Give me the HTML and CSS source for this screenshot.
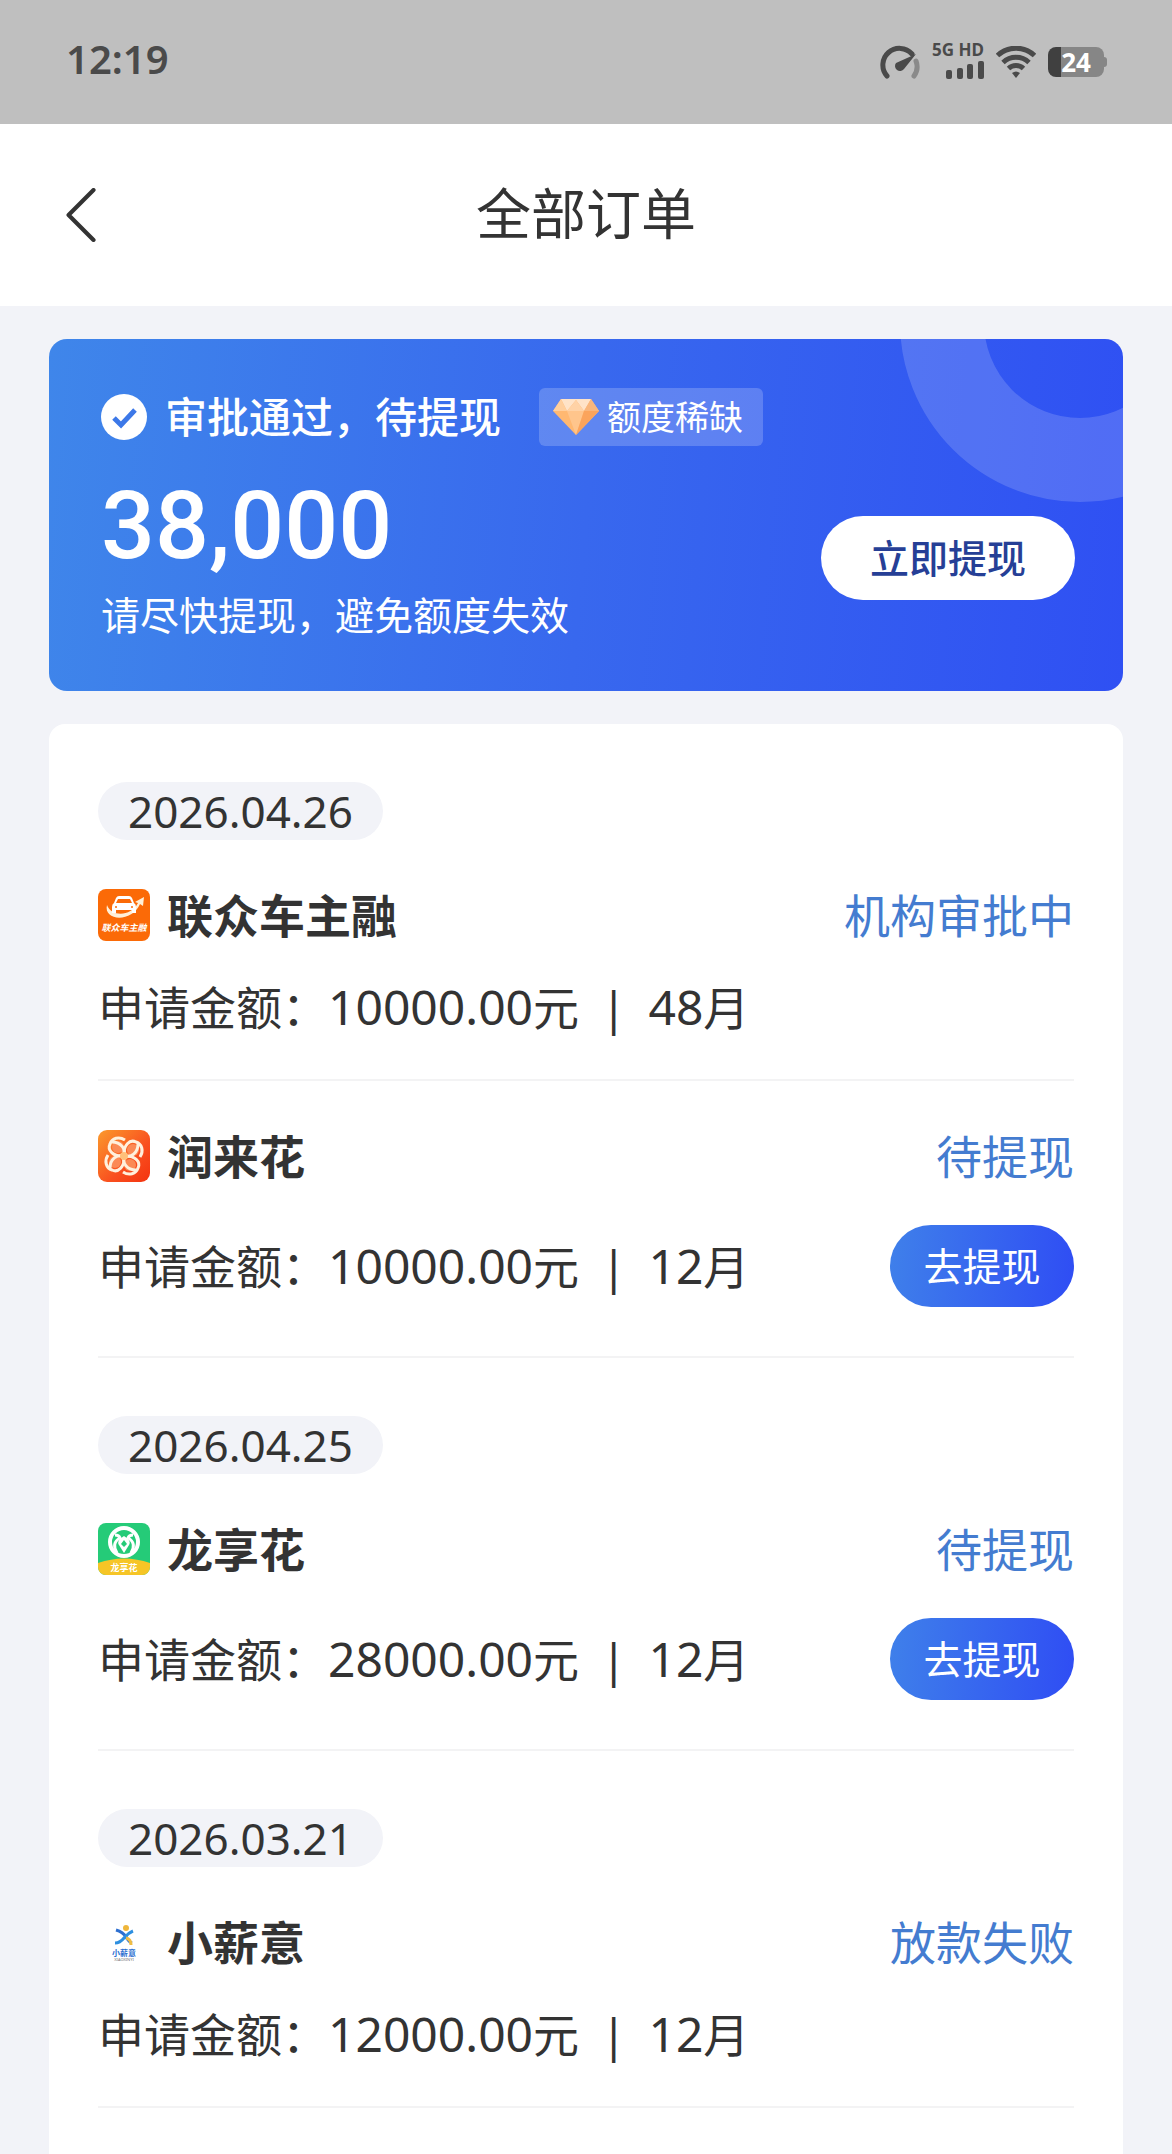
FILE: index.html
```html
<!DOCTYPE html>
<html lang="zh-CN">
<head>
  <meta charset="UTF-8">
  <meta name="viewport" content="width=device-width, initial-scale=1.0">
  <title>全部订单</title>
  <link rel="stylesheet" href="styles.css">
</head>
<body>
  <div class="status-bar">
    <span class="status-time">12:19</span>
    <div class="status-icons">
      <svg class="icon-gauge" viewBox="0 0 40 34" aria-hidden="true">
        <path d="M7 31A16 16 0 0 1 32 9" fill="none" stroke="#4a4a4a" stroke-width="5" stroke-linecap="round"/>
        <path d="M36 16A16 16 0 0 1 34 31" fill="none" stroke="#8a8a8a" stroke-width="5" stroke-linecap="round"/>
        <path d="M36 9L24 24A5 5 0 1 1 16 18Z" fill="#4a4a4a"/>
      </svg>
      <div class="signal">
        <span class="signal-label">5G HD</span>
        <svg class="icon-bars" viewBox="0 0 38 18" fill="#4a4a4a" aria-hidden="true">
          <rect x="0" y="9" width="6" height="9" rx="2"/>
          <rect x="11" y="7" width="6" height="11" rx="2"/>
          <rect x="21" y="3" width="6" height="15" rx="2"/>
          <rect x="32" y="0" width="6" height="18" rx="2"/>
        </svg>
      </div>
      <svg class="icon-wifi" viewBox="0 0 40 32" aria-hidden="true">
        <g fill="none" stroke="#4a4a4a" stroke-width="5">
          <path d="M1.500 9.500A27 27 0 0 1 38.500 9.500"/>
          <path d="M7 16.500A19 19 0 0 1 33 16.500"/>
          <path d="M12.500 22.500A11 11 0 0 1 27.500 22.500"/>
        </g>
        <path d="M16 27Q20 24 24 27L20 32Z" fill="#4a4a4a"/>
      </svg>
      <div class="battery"><span>24</span></div>
    </div>
  </div>

  <header class="nav">
    <button class="back" type="button" aria-label="返回">
      <svg viewBox="0 0 30 52"><path d="M28 2L4 26L28 50" fill="none" stroke="#333" stroke-width="4" stroke-linecap="round" stroke-linejoin="round"/></svg>
    </button>
    <h1>全部订单</h1>
  </header>

  <main>
    <section class="banner">
      <svg class="banner-ring" viewBox="0 0 360 360" aria-hidden="true">
        <circle cx="180" cy="180" r="138" fill="none" stroke="#fff" stroke-opacity="0.16" stroke-width="84"/>
      </svg>
      <div class="banner-info">
        <div class="banner-title">
          <svg class="icon-check" viewBox="0 0 46 46" aria-hidden="true">
            <circle cx="23" cy="23" r="23" fill="#fff"/>
            <path d="M13 24L20 31L34 16" fill="none" stroke="#3c78e8" stroke-width="5"/>
          </svg>
          <h2>审批通过，待提现</h2>
          <span class="tag">
            <svg class="icon-diamond" viewBox="0 0 46 36" aria-hidden="true">
              <path d="M8 0H38L46 12L23 36L0 12Z" fill="#ffb871"/>
              <path d="M8 0H38L31 12L23 1L14 12Z" fill="#ffe3c8"/>
              <path d="M8 0L14 12H0Z" fill="#ffcf9e"/>
              <path d="M38 0L46 12H31Z" fill="#f9b67c"/>
              <path d="M23 1L31 12H14Z" fill="#ffd2a6"/>
              <path d="M14 12H31L23 36Z" fill="#ffc58c"/>
              <path d="M31 12H46L23 36Z" fill="#fba45c"/>
            </svg>
            额度稀缺
          </span>
        </div>
        <p class="banner-amount">38,000</p>
        <p class="banner-tip">请尽快提现，避免额度失效</p>
      </div>
      <button class="btn-banner" type="button">立即提现</button>
    </section>

    <section class="orders">
      <div class="date">2026.04.26</div>
      <article class="order">
        <div class="order-head">
          <svg class="logo" viewBox="0 0 52 52" aria-hidden="true">
            <rect width="52" height="52" rx="8" fill="#fb6a07"/>
            <path d="M9 16C5 32 34 34 42 15L45 17L46 8L37 13L40 14C33 28 13 28 9 16Z" fill="#fff0d8"/>
            <path d="M18 9Q19 7 21 7H31Q33 7 34 9L36 14Q38 15 38 18V24H34V21H18V24H14V18Q14 15 16 14Z" fill="#fff"/>
            <path d="M20 10H32L34 14H18Z" fill="#fb6a07"/>
            <circle cx="18" cy="18" r="1" fill="#fb6a07"/>
            <circle cx="34" cy="18" r="1" fill="#fb6a07"/>
            <text x="26" y="42" class="logo-text logo-text-car">联众车主融</text>
          </svg>
          <h3>联众车主融</h3>
          <span class="state">机构审批中</span>
        </div>
        <div class="order-detail">
          <p>申请金额：<b>10000.00</b>元<i>|</i><b>48</b>月</p>
        </div>
      </article>
      <article class="order">
        <div class="order-head">
          <svg class="logo" viewBox="0 0 52 52" aria-hidden="true">
            <defs>
              <linearGradient id="flower-bg" x1="0" y1="0" x2="1" y2="1">
                <stop offset="0" stop-color="#fb9a2c"/>
                <stop offset="0.6" stop-color="#f9501f"/>
                <stop offset="1" stop-color="#f4330f"/>
              </linearGradient>
              <g id="petal">
                <circle cx="20" cy="17" r="6" fill="#fb8a55"/>
                <path d="M26 26C15 27 9 20 12 14C14 8 21 6 27 10" fill="none" stroke="#fff0dc" stroke-width="3"/>
                <path d="M26 26C28 19 23 12 14 12" fill="none" stroke="#fff0dc" stroke-width="3"/>
              </g>
            </defs>
            <rect width="52" height="52" rx="9" fill="url(#flower-bg)"/>
            <use href="#petal"/>
            <use href="#petal" transform="rotate(90 26 26)"/>
            <use href="#petal" transform="rotate(180 26 26)"/>
            <use href="#petal" transform="rotate(270 26 26)"/>
            <circle cx="26" cy="26" r="4" fill="#ffc07a"/>
          </svg>
          <h3>润来花</h3>
          <span class="state">待提现</span>
        </div>
        <div class="order-detail">
          <p>申请金额：<b>10000.00</b>元<i>|</i><b>12</b>月</p>
          <button class="btn-withdraw" type="button">去提现</button>
        </div>
      </article>

      <div class="date">2026.04.25</div>
      <article class="order">
        <div class="order-head">
          <svg class="logo" viewBox="0 0 52 52" aria-hidden="true">
            <defs>
              <clipPath id="leaf-clip"><rect width="52" height="52" rx="8"/></clipPath>
            </defs>
            <g clip-path="url(#leaf-clip)">
              <rect width="52" height="52" fill="#25cb78"/>
              <path d="M0 40Q26 31 52 40V52H0Z" fill="#f6c526"/>
            </g>
            <circle cx="26" cy="19" r="14" fill="none" stroke="#fff" stroke-width="4"/>
            <path d="M17 12Q21 12 22 15C16 18 15 24 19 30M35 12Q31 12 30 15C36 18 37 24 33 30" fill="none" stroke="#fff" stroke-width="3"/>
            <path d="M26 13C31 16 33 19 31 22L26 30L21 22C19 19 21 16 26 13Z" fill="#fff"/>
            <path d="M26 17L29 21L26 24L23 21Z" fill="#25cb78"/>
            <text x="26" y="48" class="logo-text logo-text-leaf">龙享花</text>
          </svg>
          <h3>龙享花</h3>
          <span class="state">待提现</span>
        </div>
        <div class="order-detail">
          <p>申请金额：<b>28000.00</b>元<i>|</i><b>12</b>月</p>
          <button class="btn-withdraw" type="button">去提现</button>
        </div>
      </article>

      <div class="date">2026.03.21</div>
      <article class="order">
        <div class="order-head">
          <svg class="logo" viewBox="0 0 52 52" aria-hidden="true">
            <circle cx="28" cy="12" r="3" fill="#efb63a"/>
            <path d="M18 14Q25 16 28 21Q31 26 34 27" fill="none" stroke="#2d6fd0" stroke-width="3"/>
            <path d="M35 15Q30 17 26 22Q22 27 17 27" fill="none" stroke="#2d8fe0" stroke-width="3"/>
            <path d="M28 22Q33 23 33 29" fill="none" stroke="#f0bd45" stroke-width="3"/>
            <text x="26" y="40" class="logo-text logo-text-blue">小薪意</text>
            <text x="26" y="45" class="logo-text logo-text-sub">XIAOXINYI</text>
          </svg>
          <h3>小薪意</h3>
          <span class="state">放款失败</span>
        </div>
        <div class="order-detail">
          <p>申请金额：<b>12000.00</b>元<i>|</i><b>12</b>月</p>
        </div>
      </article>
    </section>
  </main>
</body>
</html>
```

FILE: styles.css
```css
* {
  box-sizing: border-box;
}
body {
  margin: 0;
  min-height: 100vh;
  display: flex;
  flex-direction: column;
  font-family: 'Noto Sans', 'Noto Sans CJK SC', sans-serif;
  background: #f2f3f8;
  color: #333;
}
h1, h2, h3, p {
  margin: 0;
}
button {
  border: none;
  padding: 0;
  font-family: inherit;
  cursor: pointer;
}
svg {
  display: block;
  flex: none;
}

/* status bar */
.status-bar {
  display: flex;
  justify-content: space-between;
  align-items: center;
  height: 124px;
  padding: 0 68px 0 66px;
  background: #bfbfbf;
  color: #4a4a4a;
}
.status-time {
  padding-bottom: 8px;
  font-size: 40px;
  font-weight: 600;
}
.status-icons {
  display: flex;
  align-items: center;
  gap: 12px;
}
.icon-gauge {
  width: 40px;
  height: 34px;
}
.signal {
  display: flex;
  flex-direction: column;
  align-items: flex-end;
  gap: 2px;
  padding-bottom: 4px;
}
.signal-label {
  font-size: 17px;
  line-height: 18px;
  font-weight: 700;
}
.icon-bars {
  width: 38px;
  height: 18px;
}
.icon-wifi {
  width: 40px;
  height: 32px;
}
.battery {
  position: relative;
  width: 56px;
  height: 30px;
  border-radius: 8px;
  background: linear-gradient(90deg, #404040 24%, #868686 24%);
  color: #fff;
  font-size: 26px;
  line-height: 30px;
  font-weight: 700;
  text-align: center;
}
.battery::after {
  content: "";
  position: absolute;
  top: 10px;
  right: -3px;
  width: 3px;
  height: 10px;
  border-radius: 0 3px 3px 0;
  background: #868686;
}

/* title bar */
.nav {
  display: grid;
  grid-template-columns: 1fr auto 1fr;
  align-items: center;
  height: 182px;
  padding: 0 64px;
  background: #fff;
}
.nav h1 {
  padding-bottom: 10px;
  font-size: 55px;
  font-weight: 400;
}
.back {
  width: 32px;
  background: none;
}
.back svg {
  width: 32px;
  height: 54px;
}

main {
  flex: 1;
  display: flex;
  flex-direction: column;
  gap: 33px;
  padding: 33px 49px 0;
}

/* banner */
.banner {
  position: relative;
  overflow: hidden;
  display: flex;
  justify-content: space-between;
  align-items: flex-end;
  padding: 48px 48px 48px 52px;
  border-radius: 18px;
  background: linear-gradient(95deg, #3f86ea, #3868ee 50%, #2f50f3);
  color: #fff;
}
.banner-ring {
  position: absolute;
  top: -197px;
  right: -137px;
  width: 360px;
  height: 360px;
}
.banner-title {
  display: flex;
  align-items: center;
}
.icon-check {
  width: 46px;
  height: 46px;
}
.banner-title h2 {
  margin: 0 38px 0 18px;
  font-size: 42px;
  line-height: 60px;
  font-weight: 500;
}
.tag {
  display: flex;
  align-items: center;
  gap: 8px;
  padding: 0 20px 0 14px;
  border-radius: 6px;
  background: rgba(255, 255, 255, 0.2);
  font-size: 34px;
  line-height: 58px;
}
.icon-diamond {
  width: 46px;
  height: 36px;
}
.banner-amount {
  font-family: Roboto, sans-serif;
  font-size: 95px;
  line-height: 98px;
  font-weight: 500;
  margin: 30px 0 12px;
}
.banner-tip {
  font-size: 39px;
  line-height: 56px;
}
.btn-banner {
  width: 254px;
  height: 84px;
  margin-bottom: 43px;
  padding-bottom: 4px;
  border-radius: 42px;
  background: #fff;
  color: #263f96;
  font-size: 39px;
  font-weight: 500;
}

/* order list */
.orders {
  flex: 1;
  padding: 0 49px;
  border-radius: 16px 16px 0 0;
  background: #fff;
}
.date {
  width: fit-content;
  margin-top: 58px;
  padding: 0 30px;
  border-radius: 29px;
  background: #f2f3f8;
  font-size: 44px;
  line-height: 58px;
}
.order {
  padding: 43px 0 40px;
  border-bottom: 2px solid #f3f3f4;
}
.order-head {
  display: flex;
  align-items: center;
  margin-bottom: 28px;
}
.logo {
  width: 52px;
  height: 52px;
}
.order-head h3 {
  flex: 1;
  margin-left: 17px;
  font-size: 46px;
  line-height: 64px;
  font-weight: 700;
}
.state {
  color: #447cd0;
  font-size: 46px;
  line-height: 64px;
}
.order-detail {
  display: flex;
  justify-content: space-between;
  align-items: center;
}
.order-detail p {
  font-size: 46px;
  line-height: 64px;
}
.order-detail b {
  font-size: 48px;
  line-height: 48px;
  font-weight: 400;
}
.order-detail i {
  margin: 0 22px;
  font-style: normal;
}
.btn-withdraw {
  width: 184px;
  height: 82px;
  margin: 9px 0;
  padding-bottom: 4px;
  border-radius: 41px;
  background: linear-gradient(95deg, #3f80ea, #2f4df4);
  color: #fff;
  font-size: 39px;
}

/* lettering inside logos */
.logo-text {
  text-anchor: middle;
  fill: #fff;
  font-weight: 700;
}
.logo-text-car {
  font-size: 9px;
  font-style: italic;
}
.logo-text-leaf {
  font-size: 9px;
}
.logo-text-blue {
  font-size: 8px;
  fill: #2d6fd0;
}
.logo-text-sub {
  font-size: 4px;
  font-weight: 400;
  fill: #777;
}
```
